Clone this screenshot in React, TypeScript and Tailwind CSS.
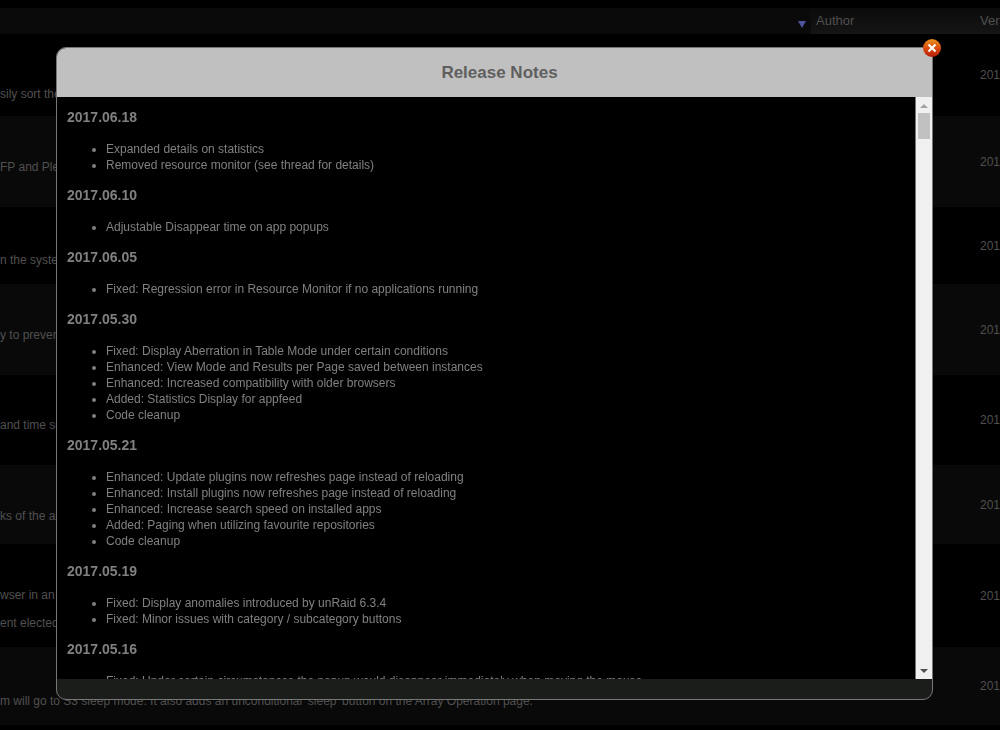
import { useRef, useState } from "react";

type Release = { version: string; changes: string[] };

const RELEASES: Release[] = [
  {
    version: "2017.06.18",
    changes: [
      "Expanded details on statistics",
      "Removed resource monitor (see thread for details)",
    ],
  },
  { version: "2017.06.10", changes: ["Adjustable Disappear time on app popups"] },
  {
    version: "2017.06.05",
    changes: ["Fixed: Regression error in Resource Monitor if no applications running"],
  },
  {
    version: "2017.05.30",
    changes: [
      "Fixed: Display Aberration in Table Mode under certain conditions",
      "Enhanced: View Mode and Results per Page saved between instances",
      "Enhanced: Increased compatibility with older browsers",
      "Added: Statistics Display for appfeed",
      "Code cleanup",
    ],
  },
  {
    version: "2017.05.21",
    changes: [
      "Enhanced: Update plugins now refreshes page instead of reloading",
      "Enhanced: Install plugins now refreshes page instead of reloading",
      "Enhanced: Increase search speed on installed apps",
      "Added: Paging when utilizing favourite repositories",
      "Code cleanup",
    ],
  },
  {
    version: "2017.05.19",
    changes: [
      "Fixed: Display anomalies introduced by unRaid 6.3.4",
      "Fixed: Minor issues with category / subcategory buttons",
    ],
  },
  {
    version: "2017.05.16",
    changes: [
      "Fixed: Under certain circumstances the popup would disappear immediately when moving the mouse",
    ],
  },
];

// height and pad are full class names so Tailwind picks them up
const APPS = [
  { lines: ["sily sort them"], height: "h-[82px]", pad: "pb-3.5" },
  { lines: ["FP and Plex"], height: "h-[91px]", pad: "pb-8" },
  { lines: ["n the system"], height: "h-[77px]", pad: "pb-4" },
  { lines: ["y to prevent"], height: "h-[91px]", pad: "pb-8" },
  { lines: ["and time se"], height: "h-[90px]", pad: "pb-8" },
  { lines: ["ks of the arr"], height: "h-[79px]", pad: "pb-5" },
  { lines: ["wser in an S", "ent elected"], height: "h-[103px]", pad: "pb-4" },
  {
    lines: [
      "m will go to S3 sleep mode. It also adds an unconditional 'sleep' button on the Array Operation page.",
    ],
    height: "h-[78px]",
    pad: "pb-4",
  },
];

function AppTable() {
  return (
    <table className="w-full table-fixed border-collapse text-left text-[#505050]">
      <colgroup>
        <col />
        <col className="w-[164px]" />
        <col className="w-[25px]" />
      </colgroup>
      <thead>
        <tr className="h-[26px] bg-[#0a0a0a] text-[13px] leading-4">
          <th className="p-0 pr-[5px]" aria-label="Description">
            <svg viewBox="0 0 8 7" className="ml-auto mt-1.5 h-[7px] w-2">
              <path d="M0 0h8L4 7z" fill="#4e559b" />
            </svg>
          </th>
          <th className="bg-linear-to-b from-[#0b0b0b] to-[#151515] p-0 pl-[5px] font-normal">
            Author
          </th>
          <th className="overflow-hidden bg-linear-to-b from-[#0b0b0b] to-[#151515] p-0 pl-[5px] font-normal">
            Version
          </th>
        </tr>
      </thead>
      <tbody className="text-[12px]">
        {APPS.map((app) => (
          <tr key={app.lines[0]} className={`even:bg-[#090909] ${app.height}`}>
            <td className={`overflow-hidden whitespace-nowrap p-0 align-bottom ${app.pad}`}>
              {app.lines.map((line) => (
                <p key={line} className="mt-3 leading-4">
                  {line}
                </p>
              ))}
            </td>
            <td className="p-0" />
            <td className="overflow-hidden p-0 pl-[5px] align-middle">2017</td>
          </tr>
        ))}
      </tbody>
    </table>
  );
}

function CloseIcon() {
  return (
    <svg viewBox="0 0 18 18" className="size-[18px]" aria-hidden="true">
      <defs>
        <linearGradient id="close-fill" x1="0" y1="0" x2="0" y2="1">
          <stop offset="0" stopColor="#e8901c" />
          <stop offset="0.5" stopColor="#d94f12" />
          <stop offset="1" stopColor="#b81a08" />
        </linearGradient>
      </defs>
      <circle cx="9" cy="9" r="9" fill="url(#close-fill)" />
      <path d="M5.5 5.5l7 7M12.5 5.5l-7 7" stroke="#fff" strokeWidth="2" />
    </svg>
  );
}

export default function App() {
  const [open, setOpen] = useState(true);
  const notesRef = useRef<HTMLDivElement>(null);

  function scrollNotes(amount: number) {
    notesRef.current?.scrollBy({ top: amount });
  }

  return (
    <main className="min-h-screen overflow-hidden bg-black pt-2 font-['Liberation_Sans',Arial,sans-serif]">
      <AppTable />

      {open && (
        <div className="fixed inset-0 flex pt-[47px] pr-[67px] pb-[30px] pl-14">
          <section
            role="dialog"
            aria-labelledby="notes-title"
            className="relative flex min-w-0 flex-1 flex-col rounded-[10px] border border-[#777] bg-[#1b1d1b]"
          >
            <header className="flex h-[49px] shrink-0 items-center justify-center rounded-t-[9px] bg-[#c0c0c0] pl-2.5">
              <h2 id="notes-title" className="text-[17px] font-bold text-[#5f5f5f]">
                Release Notes
              </h2>
            </header>

            <div className="flex min-h-0 flex-1 bg-black">
              <div
                ref={notesRef}
                className="min-w-0 flex-1 overflow-y-auto pt-3 pl-2.5 text-[#808080] [scrollbar-width:none]"
              >
                {RELEASES.map((release) => (
                  <section key={release.version} className="mb-3.5">
                    <h3 className="mb-4 text-[14px] leading-4 font-bold">{release.version}</h3>
                    <ul className="list-disc pl-[39px] text-[12px] leading-4">
                      {release.changes.map((change) => (
                        <li key={change}>{change}</li>
                      ))}
                    </ul>
                  </section>
                ))}
              </div>

              <div className="flex w-[17px] shrink-0 flex-col border-l border-[#777] bg-[#f0f0f0]">
                <button
                  aria-label="Scroll up"
                  onClick={() => scrollNotes(-40)}
                  className="flex h-4 items-center justify-center pt-0.5"
                >
                  <svg viewBox="0 0 8 4" className="h-1 w-2">
                    <path d="M0 4h8L4 0z" fill="#a3a3a3" />
                  </svg>
                </button>
                <div className="mx-0.5 h-[26px] bg-[#c1c1c1]" />
                <button
                  aria-label="Scroll down"
                  onClick={() => scrollNotes(40)}
                  className="mt-auto flex h-[17px] items-center justify-center"
                >
                  <svg viewBox="0 0 8 4" className="h-1 w-2">
                    <path d="M0 0h8L4 4z" fill="#505050" />
                  </svg>
                </button>
              </div>
            </div>

            <footer className="h-5 shrink-0" />

            <button
              aria-label="Close"
              onClick={() => setOpen(false)}
              className="absolute -top-[9px] -right-[9px] cursor-pointer"
            >
              <CloseIcon />
            </button>
          </section>
        </div>
      )}
    </main>
  );
}
